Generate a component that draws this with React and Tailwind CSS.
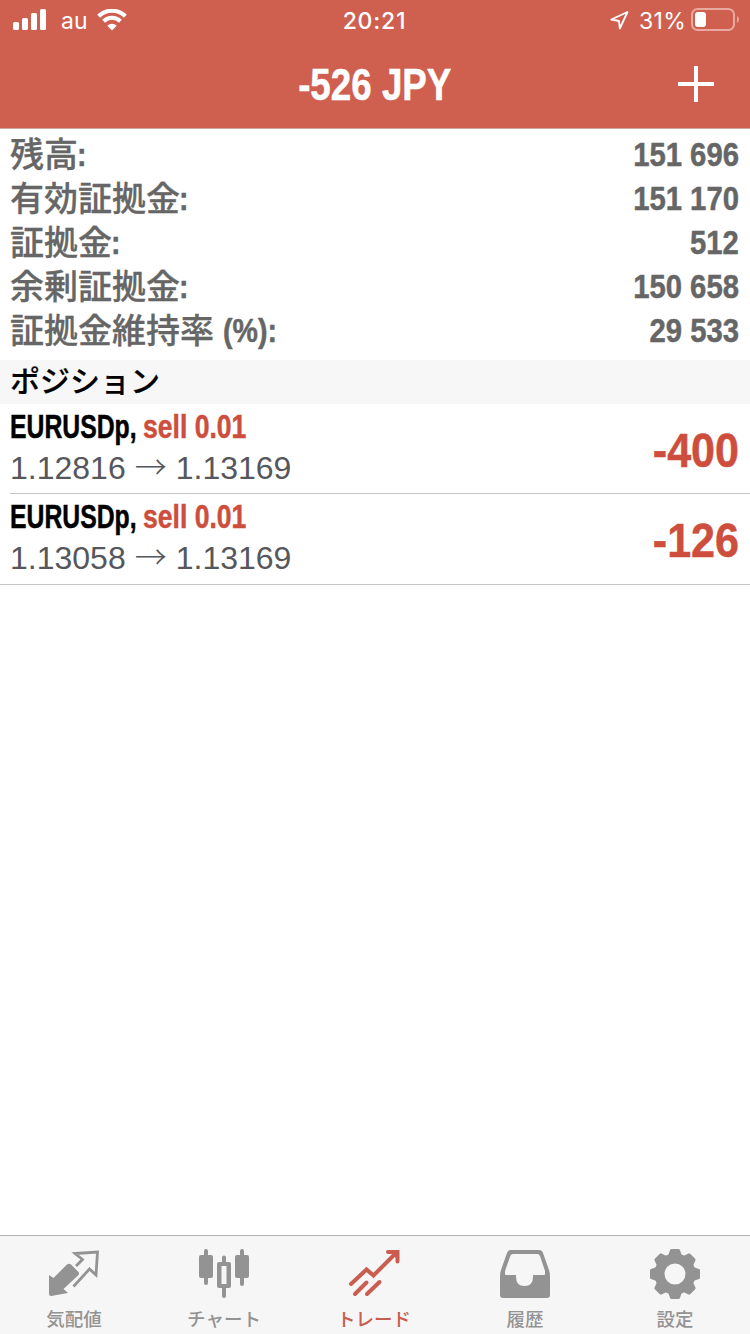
import React from "react";

const ACCOUNT = [
  { label: "残高", value: "151 696" },
  { label: "有効証拠金", value: "151 170" },
  { label: "証拠金", value: "512" },
  { label: "余剰証拠金", value: "150 658" },
  { label: "証拠金維持率", suffix: "(%)", value: "29 533" },
];

const POSITIONS = [
  { symbol: "EURUSDp", side: "sell 0.01", open: "1.12816", current: "1.13169", profit: "-400" },
  { symbol: "EURUSDp", side: "sell 0.01", open: "1.13058", current: "1.13169", profit: "-126" },
];

// Bold sans squeezed horizontally, stroked a little to keep the stems heavy
const CONDENSED =
  "inline-block font-['Liberation_Sans',sans-serif] font-bold whitespace-pre [-webkit-text-stroke:0.5px_currentColor]";

function StatusBar() {
  return (
    <div className="grid h-10 grid-cols-3 items-center pl-[13px] pr-[11px] font-['Inter','Liberation_Sans',sans-serif] text-[23px] leading-10 text-white">
      <div className="flex items-center">
        <svg width="34" height="22" viewBox="0 0 34 22" fill="currentColor">
          <rect x="0" y="13" width="6" height="8" rx="1.6" />
          <rect x="9" y="9" width="6" height="12" rx="1.6" />
          <rect x="18" y="4" width="6" height="17" rx="1.6" />
          <rect x="27" y="0" width="6" height="21" rx="1.6" />
        </svg>
        <span className="ml-[14px] w-[26px] pt-0.5 leading-[38px]">au</span>
        <svg className="ml-[10px]" width="30" height="22" viewBox="0 0 30 22" fill="none" stroke="currentColor">
          <path d="M1.700 7.200a19 19 0 0 1 26.600 0" strokeWidth="4.200" />
          <path d="M6.600 12.200a12 12 0 0 1 16.800 0" strokeWidth="4" />
          <path d="M15 21.500l-4.700-4.800a6.700 6.700 0 0 1 9.400 0z" fill="currentColor" stroke="none" />
        </svg>
      </div>
      <div className="pt-0.5 pr-[3px] text-center font-medium leading-[38px] tracking-[0.8px]">20:21</div>
      <div className="flex items-center justify-end">
        <svg width="20" height="20" viewBox="0 0 20 20" fill="none" stroke="currentColor" strokeWidth="1.800" strokeLinejoin="round">
          <path d="M18.500 2L2.300 9.500l7.700 1.500.8 7.500z" />
        </svg>
        <span className="ml-[10px] w-[48px] pt-0.5 leading-[38px] tracking-[0.3px] whitespace-nowrap">31%</span>
        <svg className="ml-1" width="48" height="24" viewBox="0 0 48 24" fill="none">
          <rect x="1" y="1" width="42" height="21" rx="5.500" stroke="#e8a99f" strokeWidth="2" />
          <rect x="4" y="4" width="11" height="15" rx="3" fill="#fff" />
          <path d="M46 8c2.600 1.500 2.600 5.500 0 7z" fill="#e8a99f" />
        </svg>
      </div>
    </div>
  );
}

function Header() {
  return (
    <header className="h-[129px] border-b border-[#c9a59c] bg-[#cf604f]">
      <StatusBar />
      <div className="grid h-[88px] grid-cols-[1fr_auto_1fr] items-center">
        <span />
        <h1 className={`${CONDENSED} scale-x-[0.835] pt-0.5 text-[44px] leading-[86px] text-white`}>-526 JPY</h1>
        <svg className="mr-9 justify-self-end" width="36" height="36" viewBox="0 0 36 36" stroke="#fff" strokeWidth="4">
          <path d="M0 18h36M18 0v36" />
        </svg>
      </div>
    </header>
  );
}

function AccountRow({ label, suffix, value }) {
  return (
    <div className="flex h-11 items-start justify-between text-[34px] leading-[44px] text-[#666]">
      <div className="flex items-start">
        <span className="font-['Noto_Sans_CJK_JP',sans-serif] font-medium leading-[42px] [-webkit-text-stroke:0.3px_currentColor]">
          {label}
        </span>
        <span className={`${CONDENSED} origin-left scale-x-[0.84] ${suffix ? "ml-[9px]" : "-ml-px"}`}>{suffix}:</span>
      </div>
      <span className={`${CONDENSED} origin-right scale-x-[0.86]`}>{value}</span>
    </div>
  );
}

function Position({ symbol, side, open, current, profit, last }) {
  return (
    <div className={last ? "border-b border-[#c4c4c6] pl-[10px]" : "ml-[10px] border-b border-[#c4c4c6]"}>
      <div className={`flex items-start justify-between pr-[11px] ${last ? "h-[90px]" : "h-[89px]"}`}>
        <div className="pt-[3px]">
          <div className="flex text-[33px] leading-10">
            <span className={`${CONDENSED} w-[133px] origin-left scale-x-[0.75] text-black`}>{symbol},</span>
            <span className={`${CONDENSED} origin-left scale-x-[0.805] text-[#cd4e3d]`}>{side}</span>
          </div>
          <div className="flex items-center font-['Liberation_Sans',sans-serif] text-[32px] leading-[42px] text-[#56575c]">
            <span>{open}</span>
            <span className="mx-[9px] -mt-[6px] font-['Noto_Sans_CJK_JP',sans-serif] font-light leading-[34px]">→</span>
            <span>{current}</span>
          </div>
        </div>
        <span className={`${CONDENSED} origin-right scale-x-[0.88] text-[49px] leading-[93px] text-[#cd4e3d]`}>{profit}</span>
      </div>
    </div>
  );
}

const QuotesIcon = () => (
  <svg width="50" height="50" viewBox="0 0 50 50" fill="currentColor">
    <path d="M0 26l4.500 3L18 15.500q2-1.500 4 0l7.500 7.500q1 1.500 0 3L14.500 40l4.500 4L2 47q-2 0-2-2z" />
    <path d="M27 17l6.500-6.500L26 4.500l22.500-1.500L47 26l-6.500-6L24.500 37.500" fill="none" stroke="currentColor" strokeWidth="2.800" />
  </svg>
);

const ChartIcon = () => (
  <svg width="50" height="50" viewBox="0 0 50 50" fill="currentColor">
    <rect x="5" y="0" width="4" height="36" rx="2" />
    <rect x="0" y="6" width="14" height="23" rx="2" />
    <rect x="41" y="0" width="4" height="37" rx="2" />
    <rect x="36" y="6" width="14" height="23" rx="2" />
    <path
      d="M23 13V8.500a2 2 0 0 1 4 0V13h3q2 0 2 2v22q0 2-2 2h-3v8a2 2 0 0 1-4 0v-8h-3q-2 0-2-2V15q0-2 2-2zM22.500 17v18h5V17z"
      fillRule="evenodd"
    />
  </svg>
);

const TradeIcon = () => (
  <svg width="52" height="50" viewBox="0 0 52 50" fill="none" stroke="currentColor" strokeWidth="4">
    <path d="M3 35L18.500 20.500l7 6L47 5" strokeLinecap="round" />
    <path d="M40 3h9.500v9.500" strokeLinecap="round" />
    <path d="M42 3h7.500v7.500z" fill="currentColor" stroke="none" />
    <path d="M7 45L18.500 33.500M19 45l12.500-12" strokeLinecap="round" />
  </svg>
);

const HistoryIcon = () => (
  <svg width="50" height="50" viewBox="0 0 50 50" fill="currentColor">
    <path
      d="M11 1h28q3 0 4 3l6 17q1 3 1 6v19q0 3-3 3H3q-3 0-3-3V27q0-3 1-6L7 4q1-3 4-3zM13 5q-2 0-2.700 2L5 22v3q0 1 1 1h10v2q0 9 8.500 9T33 28v-2h11q1 0 1-1v-3L40 7q-.7-2-2.500-2z"
      fillRule="evenodd"
    />
  </svg>
);

const SettingsIcon = () => (
  <svg width="50" height="50" viewBox="-25 -25 50 50">
    <g fill="currentColor" stroke="currentColor" strokeWidth="3" strokeLinejoin="round">
      {[0, 45, 90, 135, 180, 225, 270, 315].map((angle) => (
        <path key={angle} d="M-6.500-15L-3.500-23.500h7L6.500-15z" transform={`rotate(${angle})`} />
      ))}
    </g>
    <circle r="15.500" fill="none" stroke="currentColor" strokeWidth="10" />
  </svg>
);

const TABS = [
  { label: "気配値", Icon: QuotesIcon },
  { label: "チャート", Icon: ChartIcon },
  { label: "トレード", Icon: TradeIcon, active: true },
  { label: "履歴", Icon: HistoryIcon },
  { label: "設定", Icon: SettingsIcon },
];

function TabBar() {
  return (
    <nav className="grid h-[99px] grid-cols-[148px_152px_148px_154px_146px] border-t border-[#b0b0b0] bg-[#f6f6f6]">
      {TABS.map(({ label, Icon, active }) => (
        <div key={label} className={`flex flex-col items-center pt-[13px] ${active ? "text-[#cb5c50]" : "text-[#939393]"}`}>
          <Icon />
          <span className="mt-[5px] font-['Noto_Sans_CJK_JP',sans-serif] text-[18.500px] font-medium leading-7">{label}</span>
        </div>
      ))}
    </nav>
  );
}

export default function App() {
  return (
    <div className="flex h-[1334px] w-[750px] flex-col overflow-hidden bg-white">
      <Header />
      <section className="h-[231px] pl-[10px] pr-[11px] pt-[3px]">
        {ACCOUNT.map((row) => (
          <AccountRow key={row.label} {...row} />
        ))}
      </section>
      <h2 className="h-11 bg-[#f7f7f7] pl-[10px] font-['Noto_Sans_CJK_JP',sans-serif] text-[30px] font-medium leading-[39px] text-black [-webkit-text-stroke:0.2px_currentColor]">
        ポジション
      </h2>
      <main className="flex-1">
        {POSITIONS.map((position, i) => (
          <Position key={position.open} {...position} last={i === POSITIONS.length - 1} />
        ))}
      </main>
      <TabBar />
    </div>
  );
}
